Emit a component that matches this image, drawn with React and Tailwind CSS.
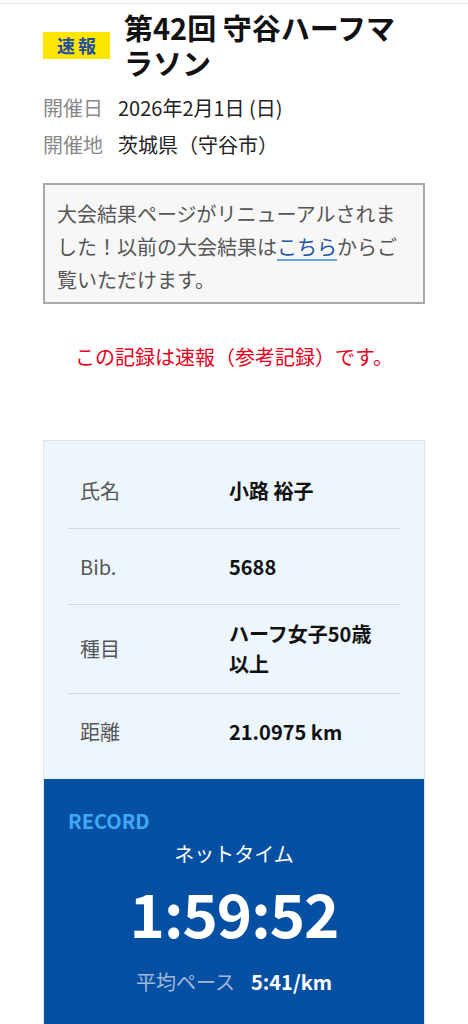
import React from 'react';

const font = { fontFamily: '"Noto Sans CJK JP", "Noto Sans", sans-serif' };

const rows = [
  { label: '氏名', value: '小路 裕子' },
  { label: 'Bib.', value: '5688' },
  { label: '種目', value: 'ハーフ女子50歳以上' },
  { label: '距離', value: '21.0975 km' },
];

export default function App() {
  return (
    <div className="min-h-screen bg-white text-[#222]" style={font}>
      {/* top rule */}
      <div className="h-[4px] border-b border-[#e2e2e2]" />

      <div className="px-[43px]">
        {/* Header */}
        <div className="flex items-center gap-[14px] pt-[6px]">
          <div className="w-[67px] h-[27px] shrink-0 bg-[#ffe600] flex items-center justify-center text-[18px] font-bold tracking-[3px] text-[#1d4e9e] leading-none pl-[3px]">
            速報
          </div>
          <h1 className="max-w-[282px] text-[29px] font-bold leading-[35px] text-[#111]">
            第42回 守谷ハーフマラソン
          </h1>
        </div>

        {/* Info */}
        <div className="mt-[9px] text-[20px]">
          <div className="flex leading-[37px]">
            <span className="w-[75px] text-[#888]">開催日</span>
            <span className="text-[#222]">2026年2月1日 (日)</span>
          </div>
          <div className="flex leading-[37px]">
            <span className="w-[75px] text-[#888]">開催地</span>
            <span className="text-[#222]">茨城県（守谷市）</span>
          </div>
        </div>

        {/* Notice */}
        <div className="mt-[20px] border-2 border-[#a8a8a8] bg-[#f7f7f7] pl-[12px] pr-[8px] pt-[12px] pb-[6px] text-[20px] leading-[33px] text-[#555]">
          大会結果ページがリニューアルされました！以前の大会結果は
          <a href="#" className="text-[#1f55a5] underline decoration-[#6aa5e0] underline-offset-[4px]">こちら</a>
          からご覧いただけます。
        </div>

        <p className="mt-[36px] text-center text-[20px] leading-[33px] text-[#e8001c]">
          この記録は速報（参考記録）です。
        </p>

        {/* Result card */}
        <div className="mt-[67px] border border-[#dbe3ec] bg-[#edf5fd]">
          <div className="px-[24px] pt-[12px] pb-[9px]">
            {rows.map((r, i) => (
              <div
                key={r.label}
                className={`flex items-center min-h-[76px] py-[14px] px-[12px] text-[20px] leading-[30px] ${
                  i < rows.length - 1 ? 'border-b border-[#cfd8e2]' : ''
                }`}
              >
                <div className="w-[149px] shrink-0 text-[#555]">{r.label}</div>
                <div className="w-[155px] font-bold text-[#111]">{r.value}</div>
              </div>
            ))}
          </div>

          <div className="bg-[#0650a4] px-[24px] pt-[28px] pb-[40px]">
            <div className="text-[20px] font-bold leading-[28px] text-[#3fa9f5]">RECORD</div>
            <div className="mt-[5px] text-center text-[20px] leading-[28px] text-white">ネットタイム</div>
            <div className="mt-[14px] text-center text-[60px] font-bold leading-[60px] text-white tracking-[-1px]">
              1:59:52
            </div>
            <div className="mt-[26px] flex items-baseline justify-center gap-[16px] text-[20px] leading-[28px]">
              <span className="text-[#a3b8d8]">平均ペース</span>
              <span className="font-bold text-white">5:41/km</span>
            </div>
          </div>
        </div>
      </div>
    </div>
  );
}
